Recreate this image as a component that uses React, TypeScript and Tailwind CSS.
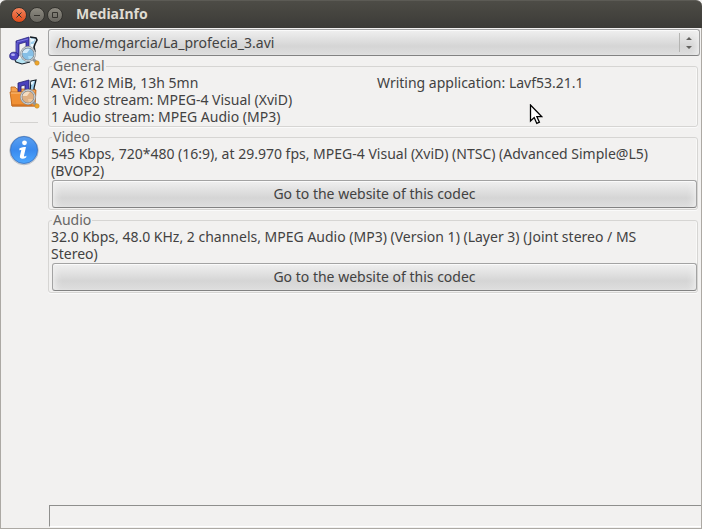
import React from "react";

const raised =
  "rounded-[3px] border border-[#a3a3a3] border-b-[#828282] bg-linear-to-b from-[#f0f0f0] via-[#d5d5d5] via-65% to-[#dedede] shadow-[inset_0_1px_0_#fafafa,inset_7px_0_7px_-5px_#f0f0f0,inset_-7px_0_7px_-5px_#f0f0f0]";

function Magnifier({ warm }: { warm?: boolean }) {
  return (
    <>
      <path d="m24 23 3 3" stroke="#93989c" strokeWidth="3" />
      <circle cx="28" cy="27" r="2.200" fill="#eea62a" stroke="#c4882a" strokeWidth=".6" />
      <circle cx="19" cy="18" r="6.800" fill={warm ? "#dfb083" : "#86bfe6"} />
      <path d="M13 17c1-4 5-5 8-4l-3 4z" fill={warm ? "#f4dcc0" : "#d3eafa"} />
      <path d="M19 20h5c0 2-2 4-4 4z" fill={warm ? "#efc79c" : "#a9dcf8"} />
      <circle cx="19" cy="18" r="6.800" stroke="#858c92" strokeWidth="2.200" />
      <circle cx="19" cy="18" r="6.900" stroke="#d5dade" strokeWidth="1" />
    </>
  );
}

function FileIcon() {
  return (
    <svg viewBox="0 0 31 31" className="size-[31px]" fill="none" aria-hidden="true">
      <path d="m7 24 10-3 5 4-10 3-5-2z" fill="#b5e4f4" />
      <path d="m6 24 1 2 6 2 8-2" stroke="#1a2530" strokeWidth="1.200" />
      <path d="m22 2 5-1-1 4-2 4 1 6 1 7-6-2z" fill="#9fd0ee" />
      <path d="m22 3 4-1-1 3-3 1zM22 8h2v4h-3z" fill="#eaf8ff" />
      <path d="m21 1 6 1 1 2-2 4-1 3 1 5" stroke="#141c24" strokeWidth="1.600" />
      <path d="M7 5 20 1v14h-3V6l-7 2v12H7z" fill="#4a42bd" stroke="#2b267f" strokeWidth=".8" />
      <path d="m8 6 11-3" stroke="#7f7ae0" />
      <path d="M8 7v12" stroke="#7771dc" strokeWidth=".8" />
      <ellipse cx="5" cy="20" rx="4.300" ry="3.800" fill="#4d45c6" stroke="#2b267f" strokeWidth=".8" />
      <ellipse cx="4" cy="18.800" rx="2" ry="1.300" fill="#b3b0f5" />
      <Magnifier />
    </svg>
  );
}

function FolderIcon() {
  return (
    <svg viewBox="0 0 31 31" className="size-[31px]" fill="none" aria-hidden="true">
      <path d="M2 12V8h4l2 2h18v17H3z" fill="#f7a450" stroke="#b9651a" strokeWidth=".8" />
      <path d="M9 4 20 1v12h-4V6l-4 1v6H9z" fill="#4a42bd" stroke="#25206f" strokeWidth=".8" />
      <path d="m22 2 5-1-1 4-1 4v4h-4z" fill="#9fd0ee" stroke="#16202a" strokeWidth="1.200" />
      <path d="m22 3 3-1-1 3-2 1z" fill="#eaf8ff" />
      <path d="M1 13h13l3-2h10l-1 16H3z" fill="#f09034" stroke="#bd651b" strokeWidth=".8" />
      <path d="M2 14h12l3-2h9" stroke="#ffce96" strokeWidth=".8" />
      <path d="M3 26h20" stroke="#c9681a" />
      <Magnifier warm />
    </svg>
  );
}

function InfoIcon() {
  return (
    <svg viewBox="0 0 31 31" className="size-[31px]" fill="none" aria-hidden="true">
      <defs>
        <linearGradient id="blue" x1="0" y1="0" x2="0" y2="1">
          <stop offset="0" stopColor="#5ba0f0" />
          <stop offset=".5" stopColor="#3a8aee" />
          <stop offset="1" stopColor="#4ea8ff" />
        </linearGradient>
      </defs>
      <circle cx="15" cy="15.500" r="14.300" fill="#c9d0d9" stroke="#a3abb5" strokeWidth=".6" />
      <circle cx="15" cy="15" r="13.500" fill="url(#blue)" stroke="#3a70bd" strokeWidth=".8" />
      <circle cx="15.500" cy="7.800" r="2.400" fill="#fff" />
      <path
        d="M10.500 13.200c2-.8 4-1.200 6.500-1.200l-2 8.500c-.2 1.200.8 1.200 2.500.3l-.4 1.700c-3 2-6.800 1.600-6.200-1.400l1.400-6.200-2 .3z"
        fill="#fff"
      />
    </svg>
  );
}

function WindowButton({ label, close, children }: { label: string; close?: boolean; children: React.ReactNode }) {
  return (
    <button
      aria-label={label}
      className={
        "flex size-4 items-center justify-center rounded-full border border-[#33322e] " +
        (close ? "bg-linear-to-b from-[#f4845c] to-[#df4a16]" : "bg-linear-to-b from-[#8d8a81] to-[#68665f]")
      }
    >
      <svg viewBox="0 0 8 8" className="size-2" fill="none" stroke="#35332e" aria-hidden="true">
        {children}
      </svg>
    </button>
  );
}

function Group({ title, children }: { title: string; children: React.ReactNode }) {
  return (
    <fieldset className="min-w-0 rounded-[3px] border border-[#d6d5d3] pb-px pl-[2px] shadow-[inset_-1px_0_0_#f9f9f8,0_1px_0_#fafafa]">
      <legend className="ml-px px-px leading-4 text-[#686766]">{title}</legend>
      {children}
    </fieldset>
  );
}

function Codec({ title, text }: { title: string; text: string }) {
  return (
    <Group title={title}>
      <p className="pr-6">{text}</p>
      <div className="pt-px pl-px">
        <button className={"block h-7 w-full pb-[2px] " + raised}>Go to the website of this codec</button>
      </div>
    </Group>
  );
}

export default function App() {
  return (
    <div className="flex min-h-screen flex-col bg-[#f2f1f0] font-['Noto_Sans',sans-serif] text-sm leading-[17px] text-[#424242]">
      <header className="flex h-7 items-center gap-[2px] rounded-t-md border-t border-[#5c5b55] bg-linear-to-b from-[#4d4c46] to-[#3c3b37] pl-[11px]">
        <WindowButton label="Close" close>
          <path d="m1.500 1.500 5 5m0-5-5 5" />
        </WindowButton>
        <WindowButton label="Minimize">
          <path d="M1 4.500h6" />
        </WindowButton>
        <WindowButton label="Maximize">
          <path d="M1.500 1.500h5v5h-5z" />
        </WindowButton>
        <h1 className="pb-[2px] pl-[11px] font-bold text-[#dfdbd2]">MediaInfo</h1>
      </header>

      <div className="flex grow border-x border-b border-[#aca9a4]">
        <nav aria-label="Tools" className="flex w-[47px] shrink-0 flex-col items-start pt-2 pl-2">
          <button aria-label="Open file">
            <FileIcon />
          </button>
          <button aria-label="Open folder" className="mt-3">
            <FolderIcon />
          </button>
          <hr className="mt-3 mb-3 ml-px w-7 border-[#d3d2d0]" />
          <button aria-label="About">
            <InfoIcon />
          </button>
        </nav>

        <main className="flex min-w-0 grow flex-col">
          <div className="relative mt-px mr-px">
            <select aria-label="File" className={"block h-[27px] w-full appearance-none pr-6 pl-[7px] " + raised}>
              <option>/home/mgarcia/La_profecia_3.avi</option>
            </select>
            <svg
              viewBox="0 0 21 21"
              className="pointer-events-none absolute top-[3px] right-0 size-[21px]"
              fill="#62615f"
              aria-hidden="true"
            >
              <path d="M0 1h1v19H0z" fill="#b4b4b2" />
              <path d="m7 8 3-3 3 3zM7 14h6l-3 3z" />
            </svg>
          </div>

          <div className="mt-[2px] mr-[3px] flex flex-col gap-[2px]">
            <Group title="General">
              <div className="grid grid-cols-2 gap-x-[6px]">
                <div>
                  <p>AVI: 612 MiB, 13h 5mn</p>
                  <p>1 Video stream: MPEG-4 Visual (XviD)</p>
                  <p>1 Audio stream: MPEG Audio (MP3)</p>
                </div>
                <p className="relative">
                  Writing application: Lavf53.21.1
                  <svg
                    viewBox="0 0 14 21"
                    className="pointer-events-none absolute top-[30px] left-[152px] h-[21px] w-[14px]"
                    aria-hidden="true"
                  >
                    <path
                      d="M1.500 1v16l3.700-3.400 2.600 5.800 2.600-1.200-2.500-5.500h5z"
                      fill="#fff"
                      stroke="#000"
                      strokeWidth="1.300"
                    />
                  </svg>
                </p>
              </div>
            </Group>
            <Codec
              title="Video"
              text="545 Kbps, 720*480 (16:9), at 29.970 fps, MPEG-4 Visual (XviD) (NTSC) (Advanced Simple@L5) (BVOP2)"
            />
            <Codec
              title="Audio"
              text="32.0 Kbps, 48.0 KHz, 2 channels, MPEG Audio (MP3) (Version 1) (Layer 3) (Joint stereo / MS Stereo)"
            />
          </div>

          <div
            role="status"
            className="mt-auto mb-px ml-px h-[22px] border-t border-b border-l border-[#8f8f8d] border-b-white"
          />
        </main>
      </div>
    </div>
  );
}
